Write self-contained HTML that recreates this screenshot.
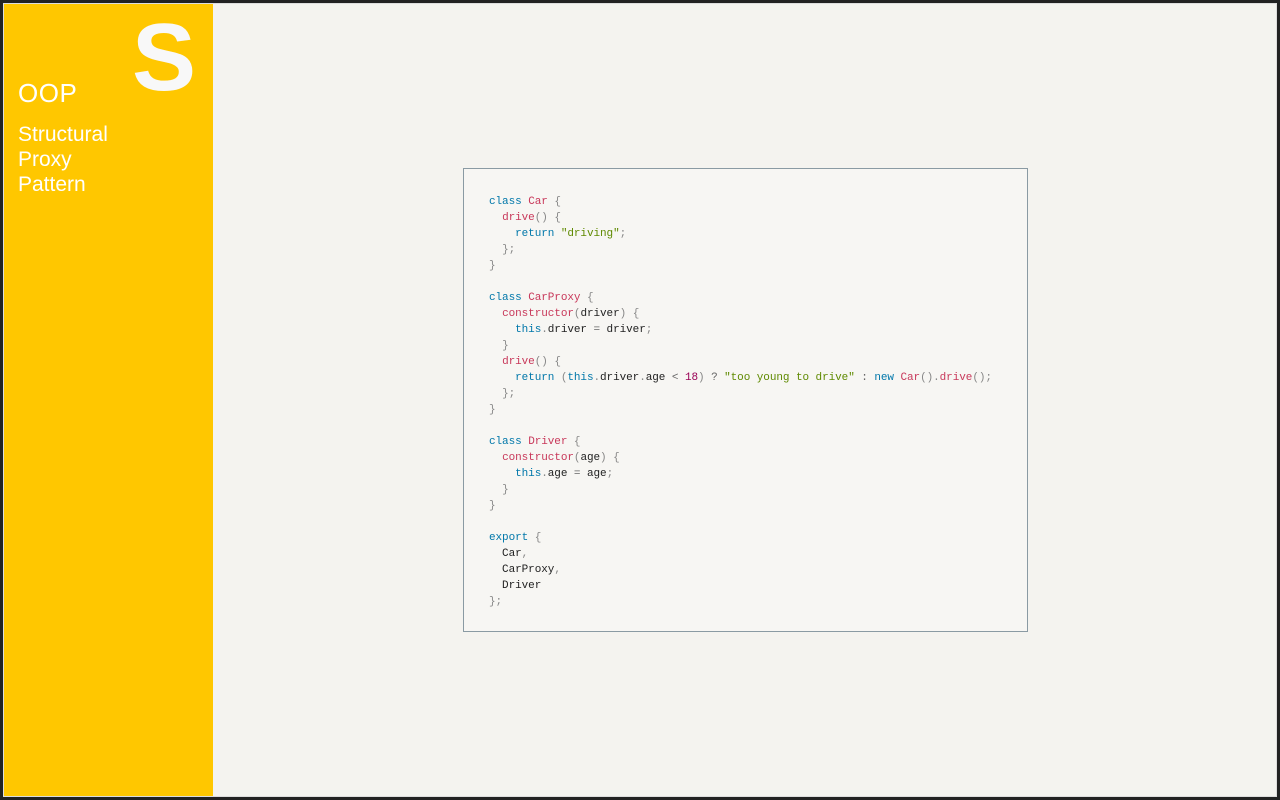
<!DOCTYPE html>
<html><head><meta charset="utf-8"><style>
*{margin:0;padding:0;box-sizing:border-box}
html,body{width:1280px;height:800px;overflow:hidden;background:#222}
.frame{position:absolute;left:3px;top:3px;width:1274px;height:794px;background:#f4f3ef;border:1px solid #ddd}
.side{position:absolute;left:4px;top:4px;width:209px;height:792px;background:#ffc700}
.S{position:absolute;left:128px;top:4px;font:bold 96px/100px "Liberation Sans",sans-serif;color:#f8f8f8}
.oop{position:absolute;left:14px;top:73px;font:normal 26px/32px "Liberation Sans",sans-serif;color:#fff;letter-spacing:0.5px}
.t{position:absolute;left:14px;top:118px;font:21px/25px "Liberation Sans",sans-serif;color:#fff}
.box{position:absolute;left:463px;top:168px;width:565px;height:464px;background:#f7f6f3;border:1px solid #8a9aa3}
pre{position:absolute;left:25px;top:25px;font:11px/16px "Liberation Mono",monospace;color:#222;letter-spacing:-0.07px}
.k{color:#07a}.f{color:#c8385a}.s{color:#5f8a00}.p{color:#888}.n{color:#905}.o{color:#666}
</style></head><body>
<div class="frame"></div>
<div class="side"><div class="S">S</div><div class="oop">OOP</div><div class="t">Structural<br>Proxy<br>Pattern</div></div>
<div class="box"><pre><span class="k">class</span> <span class="f">Car</span> <span class="p">{</span>
  <span class="f">drive</span><span class="p">()</span> <span class="p">{</span>
    <span class="k">return</span> <span class="s">"driving"</span><span class="p">;</span>
  <span class="p">};</span>
<span class="p">}</span>

<span class="k">class</span> <span class="f">CarProxy</span> <span class="p">{</span>
  <span class="f">constructor</span><span class="p">(</span>driver<span class="p">)</span> <span class="p">{</span>
    <span class="k">this</span><span class="p">.</span>driver <span class="o">=</span> driver<span class="p">;</span>
  <span class="p">}</span>
  <span class="f">drive</span><span class="p">()</span> <span class="p">{</span>
    <span class="k">return</span> <span class="p">(</span><span class="k">this</span><span class="p">.</span>driver<span class="p">.</span>age <span class="o">&lt;</span> <span class="n">18</span><span class="p">)</span> <span class="o">?</span> <span class="s">"too young to drive"</span> <span class="o">:</span> <span class="k">new</span> <span class="f">Car</span><span class="p">().</span><span class="f">drive</span><span class="p">();</span>
  <span class="p">};</span>
<span class="p">}</span>

<span class="k">class</span> <span class="f">Driver</span> <span class="p">{</span>
  <span class="f">constructor</span><span class="p">(</span>age<span class="p">)</span> <span class="p">{</span>
    <span class="k">this</span><span class="p">.</span>age <span class="o">=</span> age<span class="p">;</span>
  <span class="p">}</span>
<span class="p">}</span>

<span class="k">export</span> <span class="p">{</span>
  Car<span class="p">,</span>
  CarProxy<span class="p">,</span>
  Driver
<span class="p">};</span></pre></div>
</body></html>
